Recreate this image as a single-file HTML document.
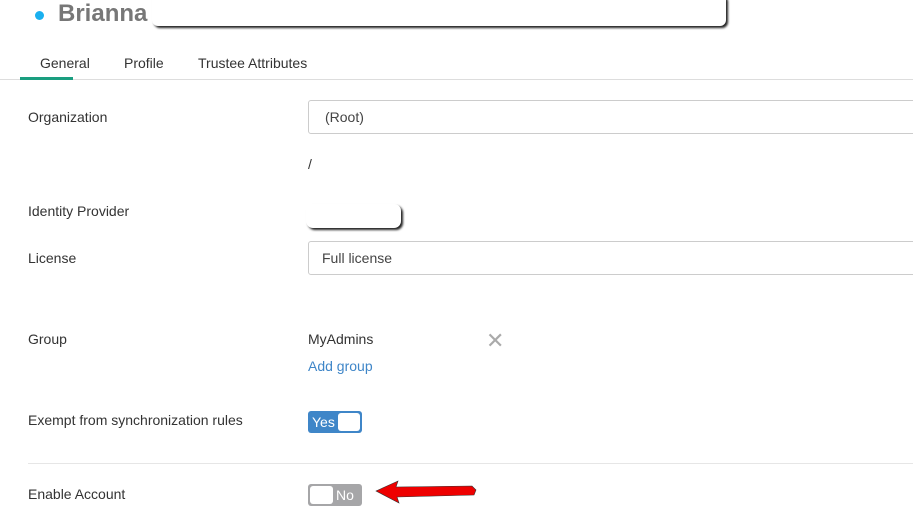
<!DOCTYPE html>
<html><head><style>
body{margin:0;width:913px;height:529px;background:#fff;font-family:"Liberation Sans",sans-serif;color:#333;position:relative;overflow:hidden}
.a{position:absolute}
.lbl{font-size:14px;color:#333}
.inp{position:absolute;left:308px;width:620px;height:34px;border:1px solid #ccc;border-radius:3px;box-sizing:border-box;font-size:14px;line-height:32px;color:#444}
</style></head><body>
<div class="a" style="left:35px;top:11px;width:9px;height:9px;border-radius:50%;background:#1ab0ef"></div>
<div class="a" style="left:58px;top:0px;font-size:24px;font-weight:bold;color:#777">Brianna</div>
<div class="a" style="left:152px;top:-6px;width:574px;height:32px;background:#fff;border-radius:6px;box-shadow:2px 2px 2px #222"></div>
<div class="a lbl" style="left:40px;top:55px">General</div>
<div class="a lbl" style="left:124px;top:55px">Profile</div>
<div class="a lbl" style="left:198px;top:55px">Trustee Attributes</div>
<div class="a" style="left:0;top:79px;width:913px;height:1px;background:#ddd"></div>
<div class="a" style="left:20px;top:77px;width:53px;height:3px;background:#1a9e80"></div>
<div class="a lbl" style="left:28px;top:109px">Organization</div>
<div class="inp" style="top:100px;padding-left:16px">(Root)</div>
<div class="a lbl" style="left:308px;top:156px">/</div>
<div class="a lbl" style="left:28px;top:203px">Identity Provider</div>
<div class="a" style="left:306px;top:204px;width:95px;height:24px;background:#fff;border-radius:7px;box-shadow:2px 2px 2px #222"></div>
<div class="a lbl" style="left:28px;top:250px">License</div>
<div class="inp" style="top:241px;padding-left:13px">Full license</div>
<div class="a lbl" style="left:28px;top:331px">Group</div>
<div class="a lbl" style="left:308px;top:331px">MyAdmins</div>
<div class="a" style="left:486px;top:330px;font-size:22px;color:#aaa;line-height:22px">✕</div>
<div class="a lbl" style="left:308px;top:358px;color:#3f86c8">Add group</div>
<div class="a lbl" style="left:28px;top:412px">Exempt from synchronization rules</div>
<div class="a" style="left:308px;top:411px;width:54px;height:22px;background:#3f86c8;border-radius:3px"></div>
<div class="a" style="left:312px;top:413px;color:#fff;font-size:14px;line-height:18px">Yes</div>
<div class="a" style="left:338px;top:413px;width:22px;height:18px;background:#fff;border-radius:3px"></div>
<div class="a" style="left:28px;top:463px;width:885px;height:1px;background:#e6e6e6"></div>
<div class="a lbl" style="left:28px;top:486px">Enable Account</div>
<div class="a" style="left:308px;top:484px;width:54px;height:22px;background:#a6a6a8;border-radius:3px"></div>
<div class="a" style="left:310px;top:486px;width:23px;height:18px;background:#fff;border-radius:3px"></div>
<div class="a" style="left:336px;top:486px;color:#fff;font-size:14px;line-height:18px">No</div>
<svg class="a" style="left:372px;top:480px" width="110" height="24"><polygon points="4,11 26,1 24,7 100,6 104,10 102,15 25,17 27,23" fill="#e00" stroke="#333" stroke-width="0.6"/></svg>
</body></html>
